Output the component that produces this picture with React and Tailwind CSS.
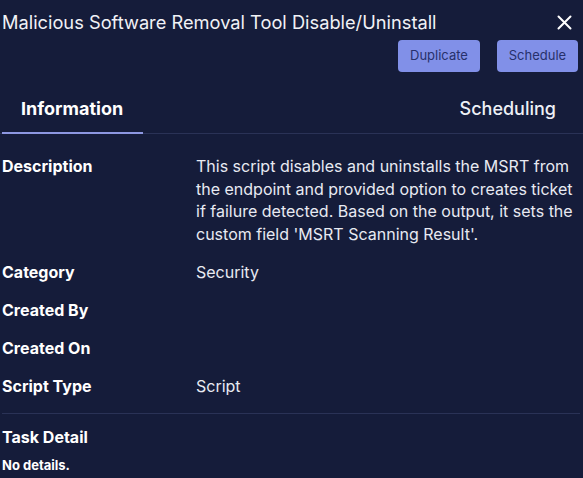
const rows = [
  { label: 'Category', value: 'Security' },
  { label: 'Created By', value: '' },
  { label: 'Created On', value: '' },
  { label: 'Script Type', value: 'Script' },
];

export default function App() {
  return (
    <div className="w-[583px] h-[478px] overflow-hidden bg-[#151c3a] text-white font-['Inter','Noto_Sans',sans-serif]">
      {/* Header */}
      <div className="flex items-center justify-between pl-[2px] pr-[11px] pt-[8px] h-[36px]">
        <h1 className="text-[18.25px] leading-[28px] text-[#f1f2f6]">
          Malicious Software Removal Tool Disable/Uninstall
        </h1>
        <button className="text-white">
          <svg width="15" height="15" viewBox="0 0 15 15" fill="none" stroke="currentColor" strokeWidth="2" strokeLinecap="round">
            <path d="M1.5 1.5l12 12M13.5 1.5l-12 12" />
          </svg>
        </button>
      </div>

      <div className="flex justify-end gap-[17px] pr-[5px] mt-[4px]">
        <button className="h-[32px] w-[82px] rounded-[4px] bg-[#8190e8] text-[13px] text-[#27316b]">
          Duplicate
        </button>
        <button className="h-[32px] w-[81px] rounded-[4px] bg-[#8190e8] text-[13px] text-[#27316b]">
          Schedule
        </button>
      </div>

      {/* Tabs */}
      <div className="flex justify-between border-b border-[#2a3256] mt-[13px] px-[2px]">
        <div className="w-[141px] pl-[19px] pt-[13px] pb-[12px] border-b-[2px] border-[#8d97e2] -mb-px">
          <span className="block text-[18px] font-bold leading-[22px] text-white">Information</span>
        </div>
        <div className="pr-[25px] pt-[13px] pb-[12px]">
          <span className="block text-[18px] font-medium leading-[22px] text-[#eef0f6]">Scheduling</span>
        </div>
      </div>

      {/* Details */}
      <div className="pl-[2px] pr-[4px] pt-[21px]">
        <div className="flex">
          <div className="w-[194px] shrink-0 text-[16px] font-bold leading-[22.5px]">Description</div>
          <div className="text-[16px] leading-[22.5px] text-[#e8eaf2]">
            This script disables and uninstalls the MSRT from the endpoint and provided option to creates ticket if failure detected. Based on the output, it sets the custom field 'MSRT Scanning Result'.
          </div>
        </div>

        <div className="flex flex-col gap-[15px] mt-[16px]">
          {rows.map((r) => (
            <div key={r.label} className="flex leading-[23px]">
              <div className="w-[194px] shrink-0 text-[16px] font-bold">{r.label}</div>
              <div className="text-[16px] text-[#e8eaf2]">{r.value}</div>
            </div>
          ))}
        </div>

        <div className="border-t border-[#2a3256] mt-[15px] mr-[-1px]" />

        <div className="mt-[12px] text-[16px] font-bold leading-[23px]">Task Detail</div>
        <div className="mt-[7px] text-[13px] font-bold leading-[18px]">No details.</div>
      </div>
    </div>
  );
}
